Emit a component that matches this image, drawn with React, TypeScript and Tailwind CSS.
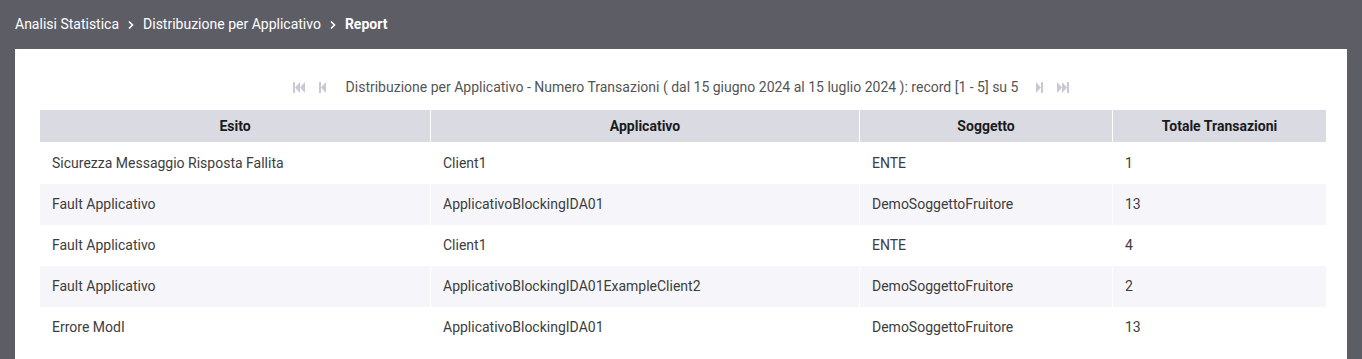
import React from 'react';

const rows = [
  { esito: 'Sicurezza Messaggio Risposta Fallita', app: 'Client1', soggetto: 'ENTE', totale: '1' },
  { esito: 'Fault Applicativo', app: 'ApplicativoBlockingIDA01', soggetto: 'DemoSoggettoFruitore', totale: '13' },
  { esito: 'Fault Applicativo', app: 'Client1', soggetto: 'ENTE', totale: '4' },
  { esito: 'Fault Applicativo', app: 'ApplicativoBlockingIDA01ExampleClient2', soggetto: 'DemoSoggettoFruitore', totale: '2' },
  { esito: 'Errore ModI', app: 'ApplicativoBlockingIDA01', soggetto: 'DemoSoggettoFruitore', totale: '13' },
];

const headers = ['Esito', 'Applicativo', 'Soggetto', 'Totale Transazioni'];

const Chevron = () => (
  <svg className="h-3 w-3 mx-[6px]" viewBox="0 0 12 12" fill="none" stroke="white" strokeWidth="1.6">
    <path d="M4 2.5 L7.5 6 L4 9.5" />
  </svg>
);

const PageIcon = ({ kind }: { kind: 'first' | 'prev' | 'next' | 'last' }) => {
  const shapes: Record<string, React.ReactNode> = {
    first: (
      <>
        <rect x="0" y="0" width="2" height="11" />
        <path d="M2 5.5 L7 0 L7 11 Z" />
        <path d="M7 5.5 L12 0 L12 11 Z" />
      </>
    ),
    prev: (
      <>
        <rect x="0" y="0" width="2" height="11" />
        <path d="M2 5.5 L7 0 L7 11 Z" />
      </>
    ),
    next: (
      <>
        <path d="M0 0 L5 5.5 L0 11 Z" />
        <rect x="5" y="0" width="2" height="11" />
      </>
    ),
    last: (
      <>
        <path d="M0 0 L5 5.5 L0 11 Z" />
        <path d="M5 0 L10 5.5 L5 11 Z" />
        <rect x="10" y="0" width="2" height="11" />
      </>
    ),
  };
  const w = kind === 'first' || kind === 'last' ? 12 : 7;
  return (
    <svg width={w} height="11" viewBox={`0 0 ${w} 11`} fill="#c9c9d3">
      {shapes[kind]}
    </svg>
  );
};

export default function App() {
  return (
    <div className="min-h-[359px] bg-[#5d5d66] font-['Roboto',sans-serif] pb-8">
      <div className="flex items-center h-[49px] px-[15px] text-[14px] text-white">
        <span>Analisi Statistica</span>
        <Chevron />
        <span>Distribuzione per Applicativo</span>
        <Chevron />
        <span className="font-bold">Report</span>
      </div>
      <div className="mx-[15px] bg-white px-[25px] pt-[27px] pb-6">
        <div className="flex items-center justify-center h-[22px] text-[14px] text-[#555]">
          <div className="flex items-center gap-[14px] mr-[20px]">
            <PageIcon kind="first" />
            <PageIcon kind="prev" />
          </div>
          <span>
            Distribuzione per Applicativo - Numero Transazioni ( dal 15 giugno 2024 al 15 luglio 2024 ): record [1 - 5] su 5
          </span>
          <div className="flex items-center gap-[14px] ml-[18px]">
            <PageIcon kind="next" />
            <PageIcon kind="last" />
          </div>
        </div>
        <div className="mt-[12px] grid grid-cols-[390px_428px_252px_213px] gap-x-px text-[14px]">
          {headers.map((h) => (
            <div key={h} className="h-8 mb-px flex items-center justify-center bg-[#d9dae2] font-bold text-[#1b1b1b]">
              {h}
            </div>
          ))}
          {rows.map((r, i) =>
            [r.esito, r.app, r.soggetto, r.totale].map((c, j) => (
              <div
                key={`${i}-${j}`}
                className={`h-[41px] flex items-center px-3 text-[#3d3d3d] ${i % 2 === 1 ? 'bg-[#f6f6fa]' : 'bg-white'}`}
              >
                {c}
              </div>
            ))
          )}
        </div>
      </div>
    </div>
  );
}
